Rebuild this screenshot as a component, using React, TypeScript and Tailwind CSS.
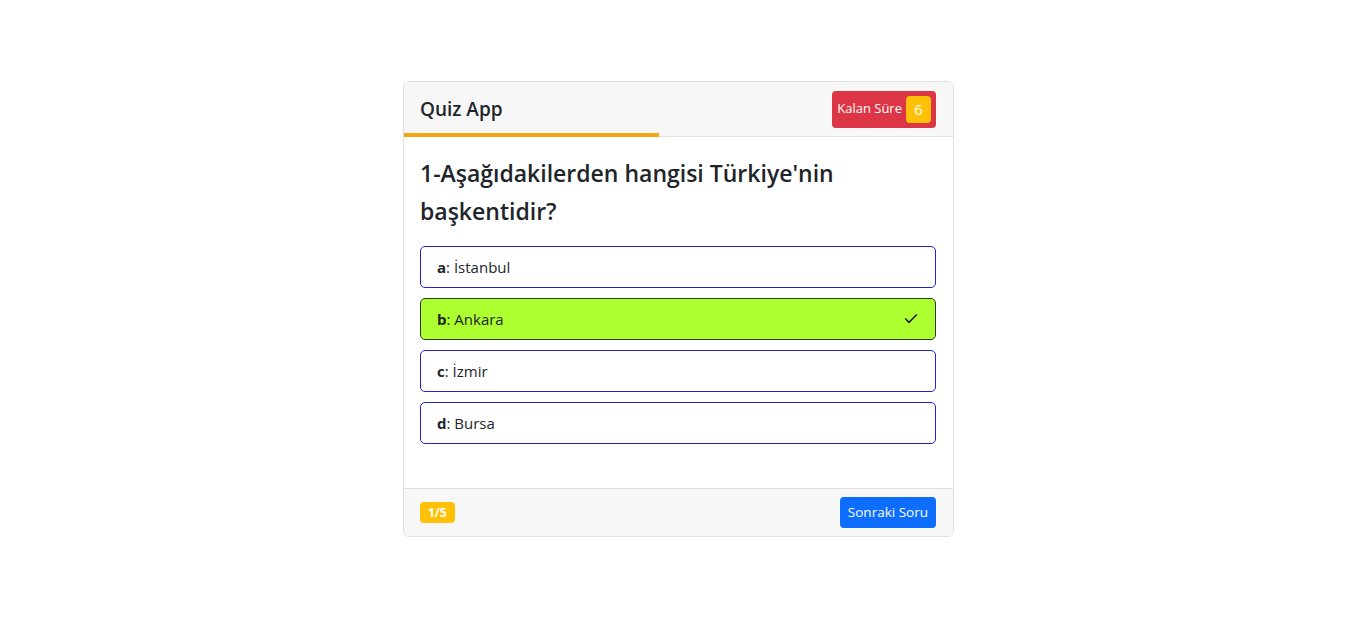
import { Check } from "lucide-react";

const options = [
  { key: "a", label: "İstanbul", correct: false },
  { key: "b", label: "Ankara", correct: true },
  { key: "c", label: "İzmir", correct: false },
  { key: "d", label: "Bursa", correct: false },
];

export default function App() {
  return (
    <div
      className="min-h-screen bg-white pt-[81px] text-[#212529]"
      style={{ fontFamily: '"Open Sans", "Noto Sans", sans-serif' }}
    >
      <div className="mx-auto w-[551px] overflow-hidden rounded-md border border-[#dfdfdf]">
        {/* header */}
        <div className="relative flex h-[55px] items-center justify-between border-b border-[#dfdfdf] bg-[#f7f7f7] pl-4 pr-[17px]">
          <h1 className="text-[19px] font-semibold">Quiz App</h1>
          <div className="flex h-[37px] items-center gap-1 rounded bg-[#dc3545] pl-[5px] pr-[5px] text-[13px] text-white">
            <span>Kalan Süre</span>
            <span className="flex h-[27px] w-[25px] items-center justify-center rounded-sm bg-[#ffc107] text-[15px]">
              6
            </span>
          </div>
          <div className="absolute -bottom-px left-0 h-1 w-[255px] bg-[#f3a712]" />
        </div>

        {/* body */}
        <div className="pb-[44px] pl-4 pr-[17px] pt-[17px]">
          <h2 className="mb-4 text-[23px] font-semibold leading-[38px]">
            1-Aşağıdakilerden hangisi Türkiye'nin başkentidir?
          </h2>
          <div className="flex flex-col gap-[10px]">
            {options.map((o) => (
              <div
                key={o.key}
                className={`flex h-[42px] items-center justify-between rounded-[5px] border px-4 text-[15px] ${
                  o.correct
                    ? "border-[#2a3a2a] bg-[#adff2f]"
                    : "border-[#2323c8] bg-white"
                }`}
              >
                <span>
                  <b>{o.key}</b>: {o.label}
                </span>
                {o.correct && <Check className="h-4 w-4" strokeWidth={2.5} />}
              </div>
            ))}
          </div>
        </div>

        {/* footer */}
        <div className="flex h-[48px] items-center justify-between border-t border-[#dfdfdf] bg-[#f7f7f7] pl-4 pr-[17px]">
          <span className="flex h-[21px] items-center rounded bg-[#ffc107] px-2 text-[12px] font-bold text-white">
            1/5
          </span>
          <button className="h-[31px] rounded bg-[#0d6efd] px-2 text-[13.5px] text-white">
            Sonraki Soru
          </button>
        </div>
      </div>
    </div>
  );
}
